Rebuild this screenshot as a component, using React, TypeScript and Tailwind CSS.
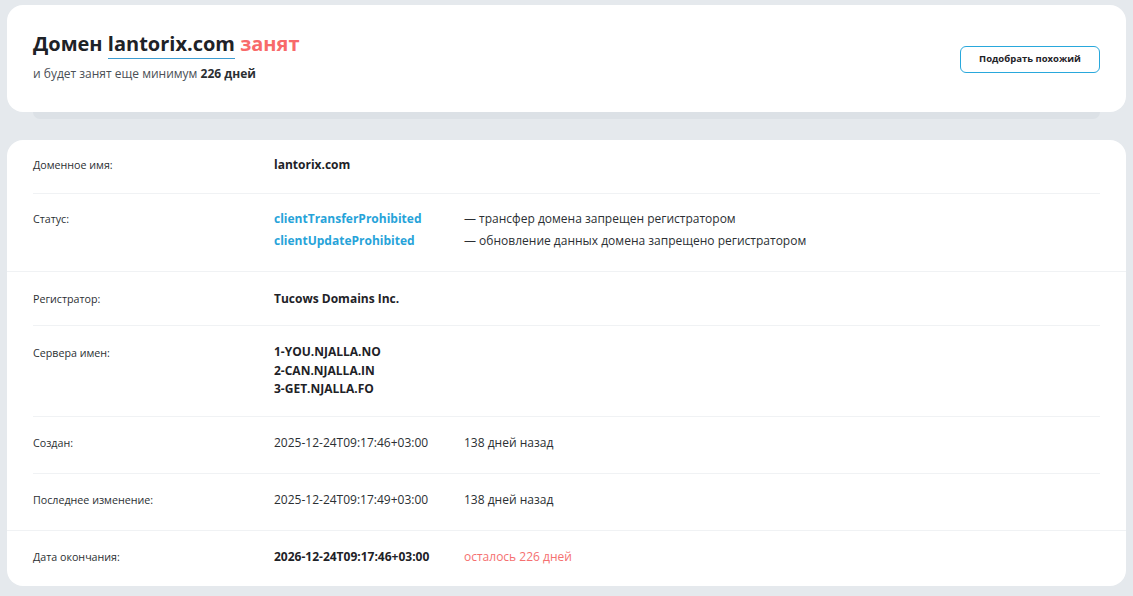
import React from "react";

const font = { fontFamily: '"Open Sans", "Noto Sans", sans-serif' };

function Divider({ full }: { full?: boolean }) {
  return <div className={full ? "h-px bg-[#f0f2f4]" : "mx-[26px] h-px bg-[#f0f2f4]"} />;
}

function Row({
  label,
  children,
  className = "",
}: {
  label: string;
  children: React.ReactNode;
  className?: string;
}) {
  return (
    <div className={"flex px-[26px] " + className}>
      <div className="w-[241px] shrink-0 text-[10.7px] leading-[20px] text-[#2b2f33]">{label}</div>
      <div className="flex-1">{children}</div>
    </div>
  );
}

export default function App() {
  return (
    <div className="min-h-[596px] bg-[#e5e9ed] px-[7px] pt-[5px] pb-[10px] text-[#1f2226]" style={font}>
      <div className="flex h-[107px] items-center justify-between rounded-[16px] bg-white px-[26px]">
        <div className="pb-[4px]">
          <h1 className="text-[20px] font-bold leading-[26px] text-[#1e2227]">
            Домен{" "}
            <span className="border-b border-[#3c9bd0] pb-[1px]">lantorix.com</span>{" "}
            <span className="text-[#f86a6a]">занят</span>
          </h1>
          <p className="mt-[9px] text-[12px] leading-[16px] text-[#4a4f55]">
            и будет занят еще минимум <span className="font-bold text-[#2b2f33]">226 дней</span>
          </p>
        </div>
        <button className="mt-[2px] h-[27px] w-[140px] rounded-[6px] border border-[#29a8dc] bg-white text-[9.5px] font-bold text-[#1f2328]">
          Подобрать похожий
        </button>
      </div>
      <div className="mx-[26px] h-[7px] rounded-b-[8px] bg-[#dce1e6]" />

      <div className="mt-[21px] rounded-[16px] bg-white">
        <Row label="Доменное имя:" className="pt-[15px] pb-[18px]">
          <div className="text-[12px] font-bold leading-[20px] text-[#1e2227]">lantorix.com</div>
        </Row>
        <Divider />
        <Row label="Статус:" className="pt-[15px] pb-[20px]">
          <div className="flex flex-col gap-[2px]">
            <div className="flex">
              <span className="w-[190px] text-[12px] font-bold leading-[20px] text-[#27a3d9]">clientTransferProhibited</span>
              <span className="text-[12px] leading-[20px] text-[#2b2f33]">— трансфер домена запрещен регистратором</span>
            </div>
            <div className="flex">
              <span className="w-[190px] text-[12px] font-bold leading-[20px] text-[#27a3d9]">clientUpdateProhibited</span>
              <span className="text-[12px] leading-[20px] text-[#2b2f33]">— обновление данных домена запрещено регистратором</span>
            </div>
          </div>
        </Row>
        <Divider full />
        <Row label="Регистратор:" className="pt-[17px] pb-[16px]">
          <div className="text-[12px] font-bold leading-[20px] text-[#1e2227]">Tucows Domains Inc.</div>
        </Row>
        <Divider />
        <Row label="Сервера имен:" className="pt-[17px] pb-[17px]">
          <div className="text-[12px] font-bold leading-[18.5px] text-[#1e2227]">
            <div>1-YOU.NJALLA.NO</div>
            <div>2-CAN.NJALLA.IN</div>
            <div>3-GET.NJALLA.FO</div>
          </div>
        </Row>
        <Divider />
        <Row label="Создан:" className="pt-[16px] pb-[20px]">
          <div className="flex text-[12px] leading-[20px] text-[#2b2f33]">
            <span className="w-[190px]">2025-12-24T09:17:46+03:00</span>
            <span>138 дней назад</span>
          </div>
        </Row>
        <Divider />
        <Row label="Последнее изменение:" className="pt-[16px] pb-[20px]">
          <div className="flex text-[12px] leading-[20px] text-[#2b2f33]">
            <span className="w-[190px]">2025-12-24T09:17:49+03:00</span>
            <span>138 дней назад</span>
          </div>
        </Row>
        <Divider full />
        <Row label="Дата окончания:" className="pt-[16px] pb-[19px]">
          <div className="flex text-[12px] leading-[20px]">
            <span className="w-[190px] font-bold text-[#1e2227]">2026-12-24T09:17:46+03:00</span>
            <span className="text-[#f57070]">осталось 226 дней</span>
          </div>
        </Row>
      </div>
    </div>
  );
}
